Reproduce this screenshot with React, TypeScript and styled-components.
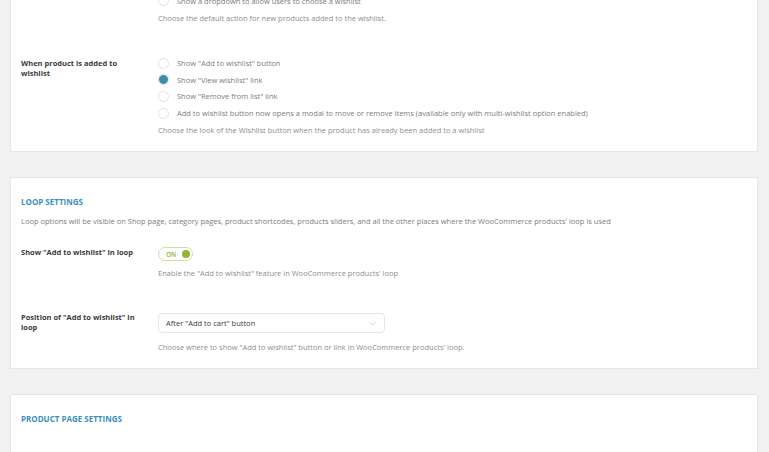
import React from "react";
import styled, { createGlobalStyle } from "styled-components";

const COLORS = {
  page: "#f1f1f1",
  panel: "#ffffff",
  border: "#e6e6e6",
  label: "#3a3a3a",
  text: "#7c7c7c",
  desc: "#8e8e8e",
  heading: "#3b8fbd",
  radio: "#3e8eaa",
  radioBorder: "#e2e2e2",
  green: "#8db536",
  greenLight: "#cddf9f",
};

const GlobalStyle = createGlobalStyle`
  html, body {
    margin: 0;
    padding: 0;
    background: ${COLORS.page};
    font-family: "Open Sans", "Noto Sans", sans-serif;
    overflow: hidden;
  }
`;

const App: React.FC = () => {
  return (
    <>
      <GlobalStyle />
      <Page>
        <Panel $offset={-23}>
          <Field>
            <FieldLabel />
            <Controls>
              <RadioList>
                <Radio label="Show a dropdown to allow users to choose a wishlist" />
              </RadioList>
              <Description>
                Choose the default action for new products added to the wishlist.
              </Description>
            </Controls>
          </Field>

          <Field $gap={33}>
            <FieldLabel>When product is added to wishlist</FieldLabel>
            <Controls>
              <RadioList>
                <Radio label={'Show "Add to wishlist" button'} />
                <Radio label={'Show "View wishlist" link'} checked />
                <Radio label={'Show "Remove from list" link'} />
                <Radio label="Add to wishlist button now opens a modal to move or remove items (available only with multi-wishlist option enabled)" />
              </RadioList>
              <Description>
                Choose the look of the Wishlist button when the product has
                already been added to a wishlist
              </Description>
            </Controls>
          </Field>
        </Panel>

        <Panel>
          <Heading>Loop settings</Heading>
          <Intro>
            Loop options will be visible on Shop page, category pages, product
            shortcodes, products sliders, and all the other places where the
            WooCommerce products' loop is used
          </Intro>

          <Field $gap={19}>
            <FieldLabel>Show "Add to wishlist" in loop</FieldLabel>
            <Controls>
              <Toggle>
                <span>ON</span>
                <Knob />
              </Toggle>
              <Description>
                Enable the "Add to wishlist" feature in WooCommerce products' loop
              </Description>
            </Controls>
          </Field>

          <Field $gap={32}>
            <FieldLabel>Position of "Add to wishlist" in loop</FieldLabel>
            <Controls>
              <Select>
                <span>After "Add to cart" button</span>
                <svg width="7" height="5" viewBox="0 0 7 5">
                  <path
                    d="M0.5 1l3 3 3-3"
                    fill="none"
                    stroke="#cfcfcf"
                    strokeWidth="0.9"
                  />
                </svg>
              </Select>
              <Description>
                Choose where to show "Add to wishlist" button or link in
                WooCommerce products' loop.
              </Description>
            </Controls>
          </Field>
        </Panel>

        <Panel>
          <Heading>Product page settings</Heading>
          <Spacer />
        </Panel>
      </Page>
    </>
  );
};

const Radio: React.FC<RadioProps> = ({ label, checked }) => {
  return (
    <RadioItem>
      <RadioCircle $checked={checked} />
      <span>{label}</span>
    </RadioItem>
  );
};

interface RadioProps {
  label: string;
  checked?: boolean;
}

const Page = styled.div`
  display: flex;
  flex-direction: column;
  gap: 25px;
  padding: 0 11px 0 10px;
`;

const Panel = styled.div<{ $offset?: number }>`
  margin-top: ${(p) => (p.$offset ? `${p.$offset}px` : "0")};
  background: ${COLORS.panel};
  border: 1px solid ${COLORS.border};
  padding: 18px 10px 14px;
  display: flex;
  flex-direction: column;
`;

const Heading = styled.div`
  font-size: 8px;
  line-height: 12px;
  font-weight: 700;
  text-transform: uppercase;
  color: ${COLORS.heading};
`;

const Intro = styled.div`
  margin-top: 6px;
  font-size: 7.5px;
  line-height: 14px;
  color: ${COLORS.text};
`;

const Field = styled.div<{ $gap?: number }>`
  margin-top: ${(p) => (p.$gap ? `${p.$gap}px` : "0")};
  display: grid;
  grid-template-columns: 137px 1fr;
  align-items: start;
`;

const FieldLabel = styled.div`
  width: 121px;
  font-size: 7.5px;
  line-height: 10px;
  font-weight: 700;
  color: ${COLORS.label};
`;

const Controls = styled.div`
  display: flex;
  flex-direction: column;
`;

const RadioList = styled.div`
  display: flex;
  flex-direction: column;
  margin-top: -3.5px;
`;

const RadioItem = styled.div`
  height: 16.7px;
  display: flex;
  align-items: center;
  gap: 8px;
  font-size: 7.5px;
  color: ${COLORS.text};
  white-space: nowrap;
`;

const RadioCircle = styled.span<{ $checked?: boolean }>`
  box-sizing: border-box;
  width: 11px;
  height: 11px;
  border-radius: 50%;
  flex-shrink: 0;
  border: ${(p) =>
    p.$checked ? "1.5px solid #ffffff" : `1px solid ${COLORS.radioBorder}`};
  background: ${(p) => (p.$checked ? COLORS.radio : "#ffffff")};
  box-shadow: ${(p) => (p.$checked ? "0 0 0 0.5px #e2e2e2" : "none")};
`;

const Description = styled.div`
  margin-top: 2px;
  font-size: 7.5px;
  line-height: 14px;
  color: ${COLORS.desc};
`;

const Toggle = styled.div`
  box-sizing: border-box;
  width: 35px;
  height: 14px;
  margin-bottom: 3px;
  padding: 0 2px 0 7px;
  border: 1px solid ${COLORS.greenLight};
  border-radius: 8px;
  display: flex;
  align-items: center;
  justify-content: space-between;

  & > span {
    font-size: 6.5px;
    font-weight: 600;
    color: ${COLORS.green};
  }
`;

const Knob = styled.span`
  width: 8px;
  height: 8px;
  border-radius: 50%;
  background: ${COLORS.green};
`;

const Select = styled.div`
  box-sizing: border-box;
  margin-top: 1px;
  margin-bottom: 5px;
  width: 227px;
  height: 20px;
  padding: 0 8px 0 7px;
  border: 1px solid ${COLORS.border};
  border-radius: 4px;
  display: flex;
  align-items: center;
  justify-content: space-between;
  font-size: 7.5px;
  color: ${COLORS.label};
`;

const Spacer = styled.div`
  height: 60px;
`;

export default App;
